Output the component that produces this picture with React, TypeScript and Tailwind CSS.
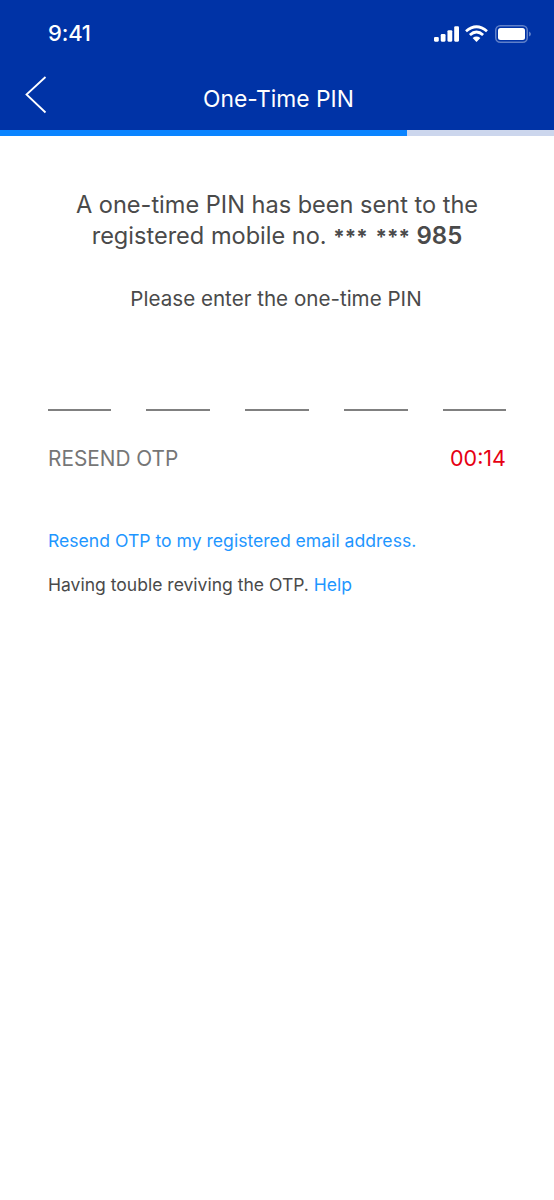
export default function App() {
  return (
    <main className="min-h-[1200px] bg-white font-['Inter',sans-serif]">
      {/* header */}
      <header className="bg-[#0033a6] h-[130px] flex flex-col">
        <div className="h-[67px] flex items-center justify-between pl-[48px] pr-[22px] text-white">
          <span className="text-[22px] leading-none font-medium tracking-[-0.2px] mb-[2px]">9:41</span>
          <div className="flex items-center gap-[7px]">
            <svg width="25" height="16" viewBox="0 0 26 16" fill="#fff" className="-mr-px">
              <rect x="0" y="11" width="5" height="5" rx="1.2" />
              <rect x="7" y="8" width="5" height="8" rx="1.2" />
              <rect x="14" y="4" width="5" height="12" rx="1.2" />
              <rect x="21" y="0" width="5" height="16" rx="1.2" />
            </svg>
            <svg width="23" height="17" viewBox="0 0 23 17" fill="none" stroke="#fff" strokeWidth="2.8">
              <path d="M1 6.2 Q11.5 -2.6 22 6.2" />
              <path d="M4.9 10 Q11.5 4 18.1 10" />
              <path d="M11.5 17 L7.6 13 Q11.5 10.2 15.4 13 Z" fill="#fff" stroke="none" />
            </svg>
            <svg width="37" height="18" viewBox="0 0 37 18" fill="none">
              <rect x="0.75" y="0.75" width="31.5" height="16.5" rx="4.5" stroke="#5f80c9" strokeWidth="1.5" />
              <rect x="3" y="3" width="27" height="12" rx="2.5" fill="#fff" />
              <path d="M34 6.5 Q36 7.5 36 9 Q36 10.5 34 11.5 Z" fill="#5f80c9" />
            </svg>
          </div>
        </div>
        <div className="relative flex-1 flex items-center justify-center">
          <svg width="22" height="38" viewBox="0 0 22 38" fill="none" stroke="#fff" strokeWidth="1.8" className="absolute left-[25px] top-[9px]">
            <path d="M20.5 1 L1.5 18.5 L20.5 36.5" />
          </svg>
          <h1 className="text-white text-[22.8px] leading-none font-normal mt-[1px] ml-[3px]">One-Time PIN</h1>
        </div>
      </header>
      <div className="h-[6px] bg-[#ccd6ed] flex">
        <div className="w-[407px] bg-[#0a84ff]" />
      </div>

      {/* message */}
      <section className="pt-[53px] px-[30px] text-center text-[#4a4a4a]">
        <p className="text-[23.55px] leading-[31px]">
          A one-time PIN has been sent to the
          <br />
          registered mobile no. <span className="font-bold text-[20.5px] [word-spacing:3px]">*** ***</span>{' '}
          <span className="font-semibold text-[24px]">985</span>
        </p>
        <p className="mt-[31px] pr-[2px] text-[20.6px] leading-[31px]">Please enter the one-time PIN</p>
      </section>

      {/* pin slots */}
      <div className="mt-[95px] mx-[48px] flex justify-between">
        <div className="w-[63px] h-[2px] bg-[#808080]" />
        <div className="w-[64px] h-[2px] bg-[#808080]" />
        <div className="w-[64px] h-[2px] bg-[#808080]" />
        <div className="w-[64px] h-[2px] bg-[#808080]" />
        <div className="w-[63px] h-[2px] bg-[#808080]" />
      </div>

      <div className="mt-[34px] mx-[48px] flex justify-between items-center leading-[26px]">
        <span className="text-[20.8px] text-[#767676]">RESEND OTP</span>
        <span className="text-[21.5px] text-[#e60012] mb-[1px]">00:14</span>
      </div>

      <p className="mt-[57px] mx-[48px] text-[17.6px] leading-[24px] text-[#1e96ff]">Resend OTP to my registered email address.</p>
      <p className="mt-[20px] mx-[48px] text-[17.55px] leading-[24px] text-[#4a4a4a]">
        Having touble reviving the OTP. <span className="text-[#1e96ff]">Help</span>
      </p>
    </main>
  );
}
